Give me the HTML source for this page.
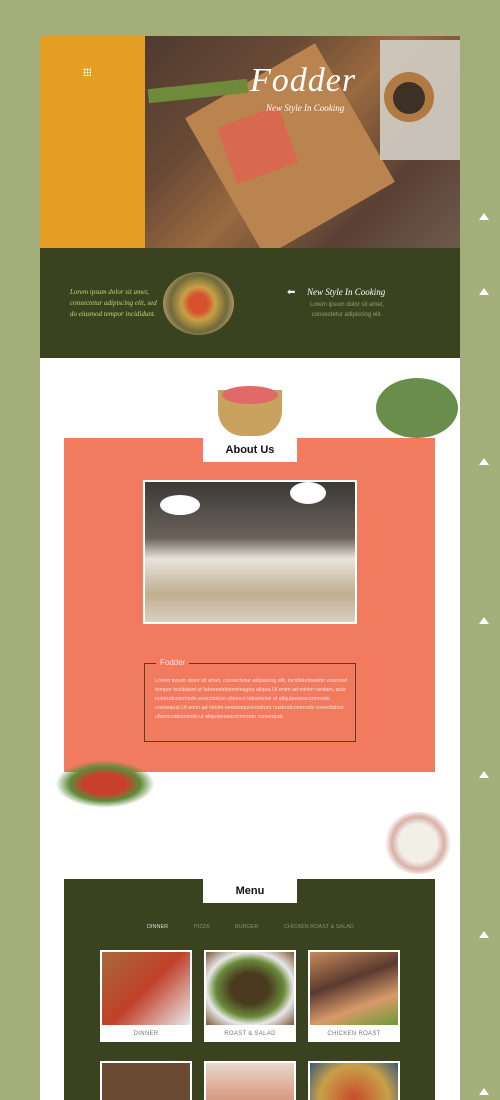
<!DOCTYPE html>
<html><head><meta charset="utf-8"><style>
*{margin:0;padding:0;box-sizing:border-box}
html,body{width:500px;height:1100px;overflow:hidden}
body{background:#a3ae7b;font-family:"Liberation Sans",sans-serif}
#w{position:relative;width:500px;height:1100px;overflow:hidden}
.a{position:absolute}
.arr{position:absolute;left:479px;width:0;height:0;border-left:5px solid transparent;border-right:5px solid transparent;border-bottom:7px solid #fff}
.card{position:absolute;width:92px;height:92px;background:#fff;padding:2px}
.card div{height:73px}
.card p{font-size:6px;color:#777;text-align:center;margin-top:6px;letter-spacing:.3px}
</style></head><body><div id="w">
<div class="a" style="left:40px;top:36px;width:105px;height:212px;background:#e59f25"></div>
<div class="a" style="left:83px;top:68px;width:8px;height:8px;background:radial-gradient(circle,#fff 0 40%,transparent 50%) 0 0/3px 3px"></div>
<div class="a" style="left:145px;top:36px;width:315px;height:212px;background:linear-gradient(135deg,#4e3b30 0%,#6a4a35 30%,#9a6a40 50%,#5a4034 75%,#6e5a4c 100%)"></div>
<div class="a" style="left:215px;top:70px;width:150px;height:160px;background:#b98450;transform:rotate(-30deg)"></div>
<div class="a" style="left:225px;top:115px;width:65px;height:60px;background:#d8684e;transform:rotate(-20deg)"></div>
<div class="a" style="left:148px;top:84px;width:100px;height:14px;background:#6f8a3a;transform:rotate(-6deg)"></div>
<div class="a" style="left:380px;top:40px;width:80px;height:120px;background:#d4cfc6;opacity:.9"></div>
<div class="a" style="left:384px;top:72px;width:50px;height:50px;border-radius:50%;background:#b07a42"></div>
<div class="a" style="left:393px;top:82px;width:32px;height:32px;border-radius:50%;background:#3d3027"></div>
<div class="a" style="left:250px;top:62px;color:#fff;font:italic 34px 'Liberation Serif',serif;letter-spacing:1px">Fodder</div>
<div class="a" style="left:266px;top:103px;color:#fff;font:italic 9px 'Liberation Serif',serif">New Style In Cooking</div>
<div class="a" style="left:40px;top:248px;width:420px;height:110px;background:#3a421f"></div>
<div class="a" style="left:70px;top:287px;color:#c6d77a;font:italic 7px/11px 'Liberation Serif',serif;width:90px">Lorem ipsum dolor sit amet, consectetur adipiscing elit, sed do eiusmod tempor incididunt.</div>
<div class="a" style="left:163px;top:272px;width:71px;height:63px;border-radius:50%;background:radial-gradient(circle,#d8512e 0 20%,#c9a047 35%,#6e6a3a 60%,#c2a070 80%,#ddd 92%)"></div>
<div class="a" style="left:287px;top:287px;color:#eee;font-size:10px">⬅</div>
<div class="a" style="left:307px;top:287px;color:#fff;font:italic 9px 'Liberation Serif',serif">New Style In Cooking</div>
<div class="a" style="left:307px;top:300px;color:#9aa070;font-size:6px;line-height:10px;width:80px;text-align:center">Lorem ipsum dolor sit amet, consectetur adipiscing elit.</div>
<div class="a" style="left:40px;top:358px;width:420px;height:742px;background:#fff"></div>
<div class="a" style="left:218px;top:390px;width:64px;height:46px;border-radius:0 0 25px 25px;background:#c9a25f"></div>
<div class="a" style="left:222px;top:386px;width:56px;height:18px;border-radius:50%;background:#e06a6a"></div>
<div class="a" style="left:376px;top:378px;width:82px;height:60px;border-radius:50%;background:#4f7a2c;opacity:.85"></div>
<div class="a" style="left:64px;top:438px;width:371px;height:334px;background:#f27b5f"></div>
<div class="a" style="left:203px;top:438px;width:94px;height:24px;background:#fff;text-align:center;font:bold 11px/24px 'Liberation Sans',sans-serif;color:#111">About Us</div>
<div class="a" style="left:143px;top:480px;width:214px;height:144px;background:linear-gradient(180deg,#3a3a38 0%,#6a625a 40%,#e8e4dc 55%,#bfae90 80%,#d9d0c0 100%);border:2px solid #fff"></div>
<div class="a" style="left:160px;top:495px;width:40px;height:20px;border-radius:50%;background:#fff"></div>
<div class="a" style="left:290px;top:482px;width:36px;height:22px;border-radius:50%;background:#fff"></div>
<div class="a" style="left:144px;top:663px;width:212px;height:79px;border:1px solid #5a3a22"></div>
<div class="a" style="left:156px;top:658px;background:#f27b5f;color:#fde;font-size:8px;padding:0 4px">Fodder</div>
<div class="a" style="left:155px;top:677px;width:196px;color:#fbe0d6;font-size:5.4px;line-height:9px">Lorem ipsum dolor sit amet, consectetur adipiscing elit, incididuntseddo eiusmod tempor incididunt ut laboreetdoloremagna aliqua.Ut enim ad minim veniam, quis nostrudcommodo exercitation ullamco laborisnisi ut aliquipexeacommodo consequat.Ut enim ad minim veniamquisnostrum nostrudcommodo exercitation ullamcolaborisnisi ut aliquipexeacommodo consequat.</div>
<div class="a" style="left:55px;top:760px;width:100px;height:48px;background:radial-gradient(ellipse,#c8402a 0 30%,#5d8b3a 50%,transparent 70%)"></div>
<div class="a" style="left:382px;top:812px;width:72px;height:62px;border-radius:50%;background:radial-gradient(circle,#f2efe6 0 40%,#d9b0a8 55%,transparent 70%)"></div>
<div class="a" style="left:64px;top:879px;width:371px;height:221px;background:#3a421f"></div>
<div class="a" style="left:203px;top:879px;width:94px;height:24px;background:#fff;text-align:center;font:bold 11px/24px 'Liberation Sans',sans-serif;color:#111">Menu</div>
<div class="a" style="left:147px;top:924px;font-size:5.5px;color:#ddd">DINNER</div>
<div class="a" style="left:194px;top:924px;font-size:5.5px;color:#8c9070">PIZZA</div>
<div class="a" style="left:235px;top:924px;font-size:5.5px;color:#8c9070">BURGER</div>
<div class="a" style="left:284px;top:924px;font-size:5.5px;color:#8c9070">CHICKEN ROAST &amp; SALAD</div>
<div class="card" style="left:100px;top:950px"><div style="background:linear-gradient(135deg,#a86a3a,#c0402a 50%,#e8e8e8)"></div><p>DINNER</p></div>
<div class="card" style="left:204px;top:950px"><div style="background:radial-gradient(ellipse,#4a3a20 0 30%,#6a8a3a 55%,#e8e8e8 70%,#7a5a3a)"></div><p>ROAST &amp; SALAD</p></div>
<div class="card" style="left:308px;top:950px"><div style="background:linear-gradient(160deg,#c88a5a,#5a3a30 40%,#d89a6a 70%,#6a9a3a)"></div><p>CHICKEN ROAST</p></div>
<div class="card" style="left:100px;top:1061px"><div style="background:#6a4a30"></div></div>
<div class="card" style="left:204px;top:1061px"><div style="background:linear-gradient(#e8d8c8,#c85a3a)"></div></div>
<div class="card" style="left:308px;top:1061px"><div style="background:radial-gradient(circle,#c84a2a,#c8a04a 60%,#3a5a7a)"></div></div>
<div class="arr" style="top:213px"></div>
<div class="arr" style="top:288px"></div>
<div class="arr" style="top:458px"></div>
<div class="arr" style="top:617px"></div>
<div class="arr" style="top:771px"></div>
<div class="arr" style="top:931px"></div>
<div class="arr" style="top:1088px"></div>
</div></body></html>
